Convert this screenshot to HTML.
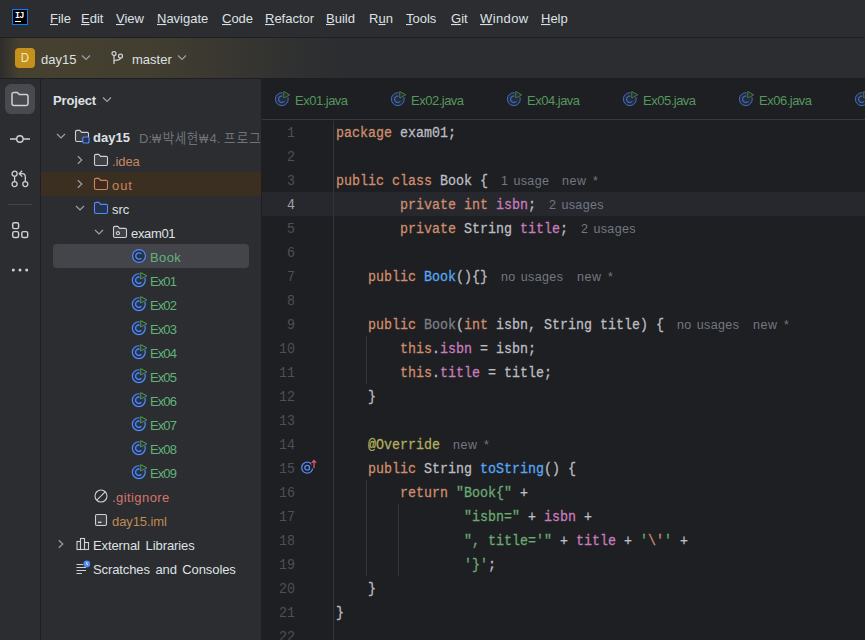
<!DOCTYPE html>
<html><head><meta charset="utf-8">
<style>
*{box-sizing:border-box;margin:0;padding:0}
html,body{width:865px;height:640px;overflow:hidden;background:#2b2d30}
body{position:relative;font-family:"Liberation Sans","NanumGothic",sans-serif;font-size:13px;color:#dfe1e5}
.abs{position:absolute}
#menubar{left:0;top:0;width:865px;height:38px;background:#2b2d30;border-bottom:1px solid #1e1f22}
.m{position:absolute;top:11px;line-height:16px;font-size:13px;color:#dfe1e5;white-space:nowrap}
.m u{text-decoration:underline;text-underline-offset:1px}
#toolbar{left:0;top:38px;width:865px;height:41px;background:linear-gradient(90deg,#2e2d2c 0,#46412f 20px,#423e30 150px,#2f3031 300px,#2b2d30 340px);border-bottom:1px solid #1e1f22}
#stripe{left:0;top:79px;width:41px;height:561px;background:#2b2d30;border-right:1px solid #1e1f22}
#proj{left:41px;top:79px;width:220px;height:561px;background:#2b2d30;overflow:hidden}
#editor{left:262px;top:79px;width:603px;height:561px;background:#1e1f22;overflow:hidden}
.t{position:absolute;line-height:16px;font-size:13px;white-space:nowrap}
.t,.m,.tab{transform:scaleY(1.050);transform-origin:0 12.500px}
.green{color:#62b37a}.orange{color:#c9875f}.red{color:#d5756c}.olive{color:#c08b50}
.gray{color:#6f737a}
.ko{font-family:"Noto Sans CJK KR","NanumGothic",sans-serif;font-size:12.500px}
svg{position:absolute;overflow:visible}
#tabs{left:0;top:0;width:603px;height:41px;border-bottom:1px solid #393b40;background:#1e1f22}
.tab{position:absolute;top:14px;line-height:16px;font-size:13px;color:#56965f;white-space:nowrap;letter-spacing:-0.500px}
.ln{position:absolute;left:0;width:33px;text-align:right;color:#4b5059;font-family:"Liberation Mono",monospace;font-size:13.33px;line-height:24px;height:24px;transform:translateY(1px) scaleY(1.140);transform-origin:0 15.700px}
.cl{position:absolute;left:74px;white-space:pre;font-family:"Liberation Mono",monospace;font-size:13.33px;line-height:24px;height:24px;color:#bcbec4;-webkit-text-stroke:0.250px;transform:translateY(1px) scaleY(1.140);transform-origin:0 15.700px}
.k{color:#cf8e6d}.f{color:#c77dbb}.fn{color:#56a8f5}.s{color:#6aab73}.an{color:#b3ae60}.dim{color:#7b7f87}
.h{position:absolute;font-family:"Liberation Sans",sans-serif;font-size:12.5px;color:#727782;line-height:24px;white-space:nowrap}
</style></head><body>
<div id="menubar" class="abs">
<div class="abs" style="left:12px;top:9px;width:16px;height:16px;background:#000;border:1px solid #087cfa"></div>
<span class="abs" style="left:15px;top:12px;font:bold 8.5px/8px 'Liberation Mono',monospace;color:#fff;letter-spacing:-0.900px">IJ</span>
<div class="abs" style="left:15px;top:21px;width:6px;height:1px;background:#fff"></div>
<span class="m" style="left:50px"><u>F</u>ile</span>
<span class="m" style="left:81px"><u>E</u>dit</span>
<span class="m" style="left:116px"><u>V</u>iew</span>
<span class="m" style="left:157px"><u>N</u>avigate</span>
<span class="m" style="left:222px"><u>C</u>ode</span>
<span class="m" style="left:265px"><u>R</u>efactor</span>
<span class="m" style="left:326px"><u>B</u>uild</span>
<span class="m" style="left:369px">R<u>u</u>n</span>
<span class="m" style="left:406px"><u>T</u>ools</span>
<span class="m" style="left:451px"><u>G</u>it</span>
<span class="m" style="left:480px"><u style="letter-spacing:0.4px">W</u><span style="letter-spacing:0.4px">indow</span></span>
<span class="m" style="left:541px"><u>H</u>elp</span>
</div>
<div id="toolbar" class="abs">
<div class="abs" style="left:15px;top:10px;width:20px;height:20px;border-radius:4px;background:#c4911c;color:#f5e6c4;font-size:13.5px;line-height:20px;text-align:center"><span style="display:inline-block;transform:scaleX(0.85)">D</span></div>
<span class="t" style="left:41px;top:14px">day15</span>
<svg style="left:81px;top:15px" width="10" height="9" viewBox="0 0 10 9"><path d="M1 2.500L5 6.500L9 2.500" fill="none" stroke="#9da0a8" stroke-width="1.2"/></svg>
<svg style="left:110px;top:12px" width="14" height="16" viewBox="0 0 14 16"><g fill="none" stroke="#ced0d6" stroke-width="1.250"><circle cx="4" cy="3.500" r="2"/><circle cx="10.500" cy="6" r="2"/><path d="M4 5.500V14M4 11.500C4 9.500 10.500 11 10.500 8"/></g></svg>
<span class="t" style="left:132px;top:14px">master</span>
<svg style="left:177px;top:15px" width="10" height="9" viewBox="0 0 10 9"><path d="M1 2.500L5 6.500L9 2.500" fill="none" stroke="#9da0a8" stroke-width="1.2"/></svg>
</div>
<div id="stripe" class="abs">
<div class="abs" style="left:5px;top:5px;width:30px;height:30px;border-radius:6px;background:#484a4f"></div>
<svg style="left:11px;top:12px" width="18" height="16" viewBox="0 0 18 16"><path d="M1 3.200C1 2.200 1.800 1.500 2.700 1.500H6.300L8.300 3.600H15.300C16.200 3.600 17 4.300 17 5.300V12.800C17 13.800 16.200 14.500 15.300 14.500H2.700C1.800 14.500 1 13.800 1 12.800Z" fill="none" stroke="#ced0d6" stroke-width="1.500"/></svg>
<svg style="left:10px;top:54px" width="20" height="12" viewBox="0 0 20 12"><g fill="none" stroke="#ced0d6" stroke-width="1.400"><circle cx="9.900" cy="6" r="3.200"/><path d="M0 6H6.700M13.100 6H20"/></g></svg>
<svg style="left:11px;top:91px" width="18" height="18" viewBox="0 0 18 18"><g fill="none" stroke="#ced0d6" stroke-width="1.300"><circle cx="3.600" cy="3.700" r="2.500"/><circle cx="3.600" cy="14.100" r="2.500"/><circle cx="14.300" cy="14.100" r="2.500"/><path d="M3.600 6.200V11.600M14.300 11.600V7C14.300 5 13.300 3.700 11.300 3.700H8.500M11.200 0.800L8.200 3.700L11.200 6.600"/></g></svg>
<div class="abs" style="left:8px;top:125px;width:24px;height:1px;background:#43454a"></div>
<svg style="left:12px;top:143px" width="17" height="17" viewBox="0 0 17 17"><g fill="none" stroke="#ced0d6" stroke-width="1.450"><rect x="0.700" y="0.700" width="5.900" height="5.900" rx="1.600"/><rect x="0.700" y="9.600" width="5.900" height="5.900" rx="1.600"/><rect x="9.800" y="9.600" width="5.900" height="5.900" rx="1.600"/></g></svg>
<svg style="left:11px;top:189px" width="18" height="4" viewBox="0 0 18 4"><g fill="#ced0d6"><circle cx="2.300" cy="2" r="1.500"/><circle cx="9" cy="2" r="1.500"/><circle cx="15.700" cy="2" r="1.500"/></g></svg>
</div>
<div id="proj" class="abs">
<span class="t" style="left:12px;top:14px;font-weight:bold;letter-spacing:-0.15px">Project</span>
<svg style="left:61px;top:16px" width="10" height="9" viewBox="0 0 10 9"><path d="M1 2.500L5 6.500L9 2.500" fill="none" stroke="#9da0a8" stroke-width="1.2"/></svg>
<div class="abs" style="left:0;top:93px;width:221px;height:24px;background:#3b2f22"></div>
<div class="abs" style="left:12px;top:165px;width:196px;height:24px;border-radius:4px;background:#43454a"></div>
<svg style="left:15px;top:52px" width="10" height="10" viewBox="0 0 10 10"><path d="M1 3L5 7L9 3" fill="none" stroke="#9da0a8" stroke-width="1.2"/></svg>
<svg style="left:33px;top:49px" width="16" height="16" viewBox="0 0 16 16"><path d="M1.500 3.800C1.500 3 2.100 2.400 3 2.400H5.800L7.600 4.400H13C13.900 4.200 14.500 4.900 14.500 5.700V12C14.500 12.800 13.900 13.500 13 13.500H3C2.100 13.500 1.500 12.800 1.500 12Z" fill="#3a3c41" stroke="#ced0d6" stroke-width="1.1"/><rect x="8.800" y="9" width="6.200" height="6" rx="1" fill="#27324a" stroke="#548af7" stroke-width="1.200"/></svg>
<span class="t " style="left:52px;top:51px;font-weight:bold">day15</span>
<span class="t gray" style="left:98px;top:51px;font-size:13px">D:<span style="display:inline-block;width:10.800px"><span style="display:inline-block;transform:scaleX(0.750);transform-origin:0 50%">₩</span></span><span class="ko" style="letter-spacing:0.500px">박세현</span><span style="display:inline-block;width:10.800px"><span style="display:inline-block;transform:scaleX(0.750);transform-origin:0 50%">₩</span></span>4. <span class="ko" style="letter-spacing:1.100px">프로그</span></span>
<svg style="left:34px;top:76px" width="10" height="10" viewBox="0 0 10 10"><path d="M2.800 1.200L6.800 5L2.800 8.800" fill="none" stroke="#9da0a8" stroke-width="1.2"/></svg>
<svg style="left:52px;top:73px" width="16" height="16" viewBox="0 0 16 16"><path d="M1.500 3.800C1.500 3 2.100 2.400 3 2.400H5.800L7.600 4.400H13C13.900 4.200 14.500 4.900 14.500 5.700V12C14.500 12.800 13.900 13.500 13 13.500H3C2.100 13.500 1.500 12.800 1.500 12Z" fill="#3e4045" stroke="#ced0d6" stroke-width="1.1"/></svg>
<span class="t orange" style="left:71px;top:75px;letter-spacing:-0.1px;">.idea</span>
<svg style="left:34px;top:100px" width="10" height="10" viewBox="0 0 10 10"><path d="M2.800 1.200L6.800 5L2.800 8.800" fill="none" stroke="#9da0a8" stroke-width="1.2"/></svg>
<svg style="left:52px;top:97px" width="16" height="16" viewBox="0 0 16 16"><path d="M1.500 3.800C1.500 3 2.100 2.400 3 2.400H5.800L7.600 4.400H13C13.900 4.200 14.500 4.900 14.500 5.700V12C14.500 12.800 13.900 13.500 13 13.500H3C2.100 13.500 1.500 12.800 1.500 12Z" fill="#40281f" stroke="#c9875f" stroke-width="1.1"/></svg>
<span class="t orange" style="left:71px;top:99px;letter-spacing:0.9px;">out</span>
<svg style="left:34px;top:124px" width="10" height="10" viewBox="0 0 10 10"><path d="M1 3L5 7L9 3" fill="none" stroke="#9da0a8" stroke-width="1.2"/></svg>
<svg style="left:52px;top:121px" width="16" height="16" viewBox="0 0 16 16"><path d="M1.500 3.800C1.500 3 2.100 2.400 3 2.400H5.800L7.600 4.400H13C13.900 4.200 14.500 4.900 14.500 5.700V12C14.500 12.800 13.900 13.500 13 13.500H3C2.100 13.500 1.500 12.800 1.500 12Z" fill="#25324d" stroke="#548af7" stroke-width="1.1"/></svg>
<span class="t " style="left:71px;top:123px;">src</span>
<svg style="left:53px;top:148px" width="10" height="10" viewBox="0 0 10 10"><path d="M1 3L5 7L9 3" fill="none" stroke="#9da0a8" stroke-width="1.2"/></svg>
<svg style="left:71px;top:145px" width="16" height="16" viewBox="0 0 16 16"><path d="M1.500 3.800C1.500 3 2.100 2.400 3 2.400H5.800L7.600 4.400H13C13.900 4.200 14.500 4.900 14.500 5.700V12C14.500 12.800 13.900 13.500 13 13.500H3C2.100 13.500 1.500 12.800 1.500 12Z" fill="#3e4045" stroke="#ced0d6" stroke-width="1.1"/><circle cx="5.900" cy="9.200" r="1.600" fill="none" stroke="#ced0d6" stroke-width="1.100"/></svg>
<span class="t " style="left:90px;top:147px;letter-spacing:-0.33px;">exam01</span>
<svg style="left:90px;top:169px;opacity:1" width="16" height="16" viewBox="0 0 16 16"><circle cx="8" cy="8" r="6.450" fill="#25324d" stroke="#548af7" stroke-width="1.2"/><path d="M10.450 5.950A3.200 3.200 0 1 0 10.450 10.050" fill="none" stroke="#548af7" stroke-width="1.3"/></svg>
<span class="t green" style="left:109px;top:171px;letter-spacing:0.4px;">Book</span>
<svg style="left:90px;top:193px;opacity:1" width="16" height="16" viewBox="0 0 16 16"><g transform="translate(-0.200,0.200)"><circle cx="8" cy="8" r="6.450" fill="#25324d" stroke="#548af7" stroke-width="1.2"/><path d="M10.450 5.950A3.200 3.200 0 1 0 10.450 10.050" fill="none" stroke="#548af7" stroke-width="1.3"/></g><path d="M8.600 -1.400L17.800 3.800L8.600 9Z" fill="#2b2d30"/><path d="M9.700 0.500L15.900 3.800L9.700 7.100Z" fill="#273c2b" stroke="#57965c" stroke-width="0.950" stroke-linejoin="round"/></svg>
<span class="t green" style="left:109px;top:195px;letter-spacing:-0.9px;">Ex01</span>
<svg style="left:90px;top:217px;opacity:1" width="16" height="16" viewBox="0 0 16 16"><g transform="translate(-0.200,0.200)"><circle cx="8" cy="8" r="6.450" fill="#25324d" stroke="#548af7" stroke-width="1.2"/><path d="M10.450 5.950A3.200 3.200 0 1 0 10.450 10.050" fill="none" stroke="#548af7" stroke-width="1.3"/></g><path d="M8.600 -1.400L17.800 3.800L8.600 9Z" fill="#2b2d30"/><path d="M9.700 0.500L15.900 3.800L9.700 7.100Z" fill="#273c2b" stroke="#57965c" stroke-width="0.950" stroke-linejoin="round"/></svg>
<span class="t green" style="left:109px;top:219px;letter-spacing:-0.9px;">Ex02</span>
<svg style="left:90px;top:241px;opacity:1" width="16" height="16" viewBox="0 0 16 16"><g transform="translate(-0.200,0.200)"><circle cx="8" cy="8" r="6.450" fill="#25324d" stroke="#548af7" stroke-width="1.2"/><path d="M10.450 5.950A3.200 3.200 0 1 0 10.450 10.050" fill="none" stroke="#548af7" stroke-width="1.3"/></g><path d="M8.600 -1.400L17.800 3.800L8.600 9Z" fill="#2b2d30"/><path d="M9.700 0.500L15.900 3.800L9.700 7.100Z" fill="#273c2b" stroke="#57965c" stroke-width="0.950" stroke-linejoin="round"/></svg>
<span class="t green" style="left:109px;top:243px;letter-spacing:-0.9px;">Ex03</span>
<svg style="left:90px;top:265px;opacity:1" width="16" height="16" viewBox="0 0 16 16"><g transform="translate(-0.200,0.200)"><circle cx="8" cy="8" r="6.450" fill="#25324d" stroke="#548af7" stroke-width="1.2"/><path d="M10.450 5.950A3.200 3.200 0 1 0 10.450 10.050" fill="none" stroke="#548af7" stroke-width="1.3"/></g><path d="M8.600 -1.400L17.800 3.800L8.600 9Z" fill="#2b2d30"/><path d="M9.700 0.500L15.900 3.800L9.700 7.100Z" fill="#273c2b" stroke="#57965c" stroke-width="0.950" stroke-linejoin="round"/></svg>
<span class="t green" style="left:109px;top:267px;letter-spacing:-0.9px;">Ex04</span>
<svg style="left:90px;top:289px;opacity:1" width="16" height="16" viewBox="0 0 16 16"><g transform="translate(-0.200,0.200)"><circle cx="8" cy="8" r="6.450" fill="#25324d" stroke="#548af7" stroke-width="1.2"/><path d="M10.450 5.950A3.200 3.200 0 1 0 10.450 10.050" fill="none" stroke="#548af7" stroke-width="1.3"/></g><path d="M8.600 -1.400L17.800 3.800L8.600 9Z" fill="#2b2d30"/><path d="M9.700 0.500L15.900 3.800L9.700 7.100Z" fill="#273c2b" stroke="#57965c" stroke-width="0.950" stroke-linejoin="round"/></svg>
<span class="t green" style="left:109px;top:291px;letter-spacing:-0.9px;">Ex05</span>
<svg style="left:90px;top:313px;opacity:1" width="16" height="16" viewBox="0 0 16 16"><g transform="translate(-0.200,0.200)"><circle cx="8" cy="8" r="6.450" fill="#25324d" stroke="#548af7" stroke-width="1.2"/><path d="M10.450 5.950A3.200 3.200 0 1 0 10.450 10.050" fill="none" stroke="#548af7" stroke-width="1.3"/></g><path d="M8.600 -1.400L17.800 3.800L8.600 9Z" fill="#2b2d30"/><path d="M9.700 0.500L15.900 3.800L9.700 7.100Z" fill="#273c2b" stroke="#57965c" stroke-width="0.950" stroke-linejoin="round"/></svg>
<span class="t green" style="left:109px;top:315px;letter-spacing:-0.9px;">Ex06</span>
<svg style="left:90px;top:337px;opacity:1" width="16" height="16" viewBox="0 0 16 16"><g transform="translate(-0.200,0.200)"><circle cx="8" cy="8" r="6.450" fill="#25324d" stroke="#548af7" stroke-width="1.2"/><path d="M10.450 5.950A3.200 3.200 0 1 0 10.450 10.050" fill="none" stroke="#548af7" stroke-width="1.3"/></g><path d="M8.600 -1.400L17.800 3.800L8.600 9Z" fill="#2b2d30"/><path d="M9.700 0.500L15.900 3.800L9.700 7.100Z" fill="#273c2b" stroke="#57965c" stroke-width="0.950" stroke-linejoin="round"/></svg>
<span class="t green" style="left:109px;top:339px;letter-spacing:-0.9px;">Ex07</span>
<svg style="left:90px;top:361px;opacity:1" width="16" height="16" viewBox="0 0 16 16"><g transform="translate(-0.200,0.200)"><circle cx="8" cy="8" r="6.450" fill="#25324d" stroke="#548af7" stroke-width="1.2"/><path d="M10.450 5.950A3.200 3.200 0 1 0 10.450 10.050" fill="none" stroke="#548af7" stroke-width="1.3"/></g><path d="M8.600 -1.400L17.800 3.800L8.600 9Z" fill="#2b2d30"/><path d="M9.700 0.500L15.900 3.800L9.700 7.100Z" fill="#273c2b" stroke="#57965c" stroke-width="0.950" stroke-linejoin="round"/></svg>
<span class="t green" style="left:109px;top:363px;letter-spacing:-0.9px;">Ex08</span>
<svg style="left:90px;top:385px;opacity:1" width="16" height="16" viewBox="0 0 16 16"><g transform="translate(-0.200,0.200)"><circle cx="8" cy="8" r="6.450" fill="#25324d" stroke="#548af7" stroke-width="1.2"/><path d="M10.450 5.950A3.200 3.200 0 1 0 10.450 10.050" fill="none" stroke="#548af7" stroke-width="1.3"/></g><path d="M8.600 -1.400L17.800 3.800L8.600 9Z" fill="#2b2d30"/><path d="M9.700 0.500L15.900 3.800L9.700 7.100Z" fill="#273c2b" stroke="#57965c" stroke-width="0.950" stroke-linejoin="round"/></svg>
<span class="t green" style="left:109px;top:387px;letter-spacing:-0.9px;">Ex09</span>
<svg style="left:52px;top:409px" width="16" height="16" viewBox="0 0 16 16"><g fill="none" stroke="#ced0d6" stroke-width="1.100"><circle cx="8" cy="8" r="6"/><path d="M3.800 12.200L12.200 3.800"/></g></svg>
<span class="t red" style="left:71px;top:411px;letter-spacing:0.42px;">.gitignore</span>
<svg style="left:52px;top:433px" width="16" height="16" viewBox="0 0 16 16"><g fill="none" stroke="#ced0d6" stroke-width="1.100"><rect x="2.500" y="2.500" width="11" height="11" rx="1.500" fill="#3e4045"/><path d="M5 10.300H8.500" stroke-width="1.400"/></g></svg>
<span class="t olive" style="left:71px;top:435px;letter-spacing:-0.1px;">day15.iml</span>
<svg style="left:15px;top:460px" width="10" height="10" viewBox="0 0 10 10"><path d="M2.800 1.200L6.800 5L2.800 8.800" fill="none" stroke="#9da0a8" stroke-width="1.2"/></svg>
<svg style="left:34px;top:457px" width="16" height="16" viewBox="0 0 16 16"><g fill="none" stroke="#ced0d6" stroke-width="1.100"><rect x="2" y="5.500" width="3.500" height="8"/><rect x="5.500" y="2.500" width="4" height="11"/><rect x="9.500" y="6.500" width="4" height="7"/></g></svg>
<span class="t " style="left:52px;top:459px;letter-spacing:-0.1px;word-spacing:2.2px;">External Libraries</span>
<svg style="left:34px;top:481px" width="16" height="16" viewBox="0 0 16 16"><g fill="none" stroke="#ced0d6" stroke-width="1.100"><path d="M1.500 4.500H8M1.500 7.500H11M1.500 10.500H11M1.500 13.500H7"/></g><circle cx="11.800" cy="4" r="3.400" fill="#548af7"/><path d="M11.800 2.200V4.200L13 5" fill="none" stroke="#ffffff" stroke-width="0.900"/></svg>
<span class="t " style="left:52px;top:483px;letter-spacing:-0.1px;word-spacing:2px;">Scratches and Consoles</span>
</div>
<div class="abs" style="left:261px;top:79px;width:1px;height:561px;background:#1e1f22"></div>
<div id="editor" class="abs">
<div id="tabs" class="abs">
<svg style="left:12px;top:12px;opacity:0.75" width="16" height="16" viewBox="0 0 16 16"><g transform="translate(-0.200,0.200)"><circle cx="8" cy="8" r="6.450" fill="#25324d" stroke="#548af7" stroke-width="0.95"/><path d="M10.450 5.950A3.200 3.200 0 1 0 10.450 10.050" fill="none" stroke="#548af7" stroke-width="1.05"/></g><path d="M8.600 -1.400L17.800 3.800L8.600 9Z" fill="#1e1f22"/><path d="M9.700 0.500L15.900 3.800L9.700 7.100Z" fill="#273c2b" stroke="#57965c" stroke-width="0.950" stroke-linejoin="round"/></svg>
<span class="tab" style="left:33px">Ex01.java</span>
<svg style="left:128px;top:12px;opacity:0.75" width="16" height="16" viewBox="0 0 16 16"><g transform="translate(-0.200,0.200)"><circle cx="8" cy="8" r="6.450" fill="#25324d" stroke="#548af7" stroke-width="0.95"/><path d="M10.450 5.950A3.200 3.200 0 1 0 10.450 10.050" fill="none" stroke="#548af7" stroke-width="1.05"/></g><path d="M8.600 -1.400L17.800 3.800L8.600 9Z" fill="#1e1f22"/><path d="M9.700 0.500L15.900 3.800L9.700 7.100Z" fill="#273c2b" stroke="#57965c" stroke-width="0.950" stroke-linejoin="round"/></svg>
<span class="tab" style="left:149px">Ex02.java</span>
<svg style="left:244px;top:12px;opacity:0.75" width="16" height="16" viewBox="0 0 16 16"><g transform="translate(-0.200,0.200)"><circle cx="8" cy="8" r="6.450" fill="#25324d" stroke="#548af7" stroke-width="0.95"/><path d="M10.450 5.950A3.200 3.200 0 1 0 10.450 10.050" fill="none" stroke="#548af7" stroke-width="1.05"/></g><path d="M8.600 -1.400L17.800 3.800L8.600 9Z" fill="#1e1f22"/><path d="M9.700 0.500L15.900 3.800L9.700 7.100Z" fill="#273c2b" stroke="#57965c" stroke-width="0.950" stroke-linejoin="round"/></svg>
<span class="tab" style="left:265px">Ex04.java</span>
<svg style="left:360px;top:12px;opacity:0.75" width="16" height="16" viewBox="0 0 16 16"><g transform="translate(-0.200,0.200)"><circle cx="8" cy="8" r="6.450" fill="#25324d" stroke="#548af7" stroke-width="0.95"/><path d="M10.450 5.950A3.200 3.200 0 1 0 10.450 10.050" fill="none" stroke="#548af7" stroke-width="1.05"/></g><path d="M8.600 -1.400L17.800 3.800L8.600 9Z" fill="#1e1f22"/><path d="M9.700 0.500L15.900 3.800L9.700 7.100Z" fill="#273c2b" stroke="#57965c" stroke-width="0.950" stroke-linejoin="round"/></svg>
<span class="tab" style="left:381px">Ex05.java</span>
<svg style="left:476px;top:12px;opacity:0.75" width="16" height="16" viewBox="0 0 16 16"><g transform="translate(-0.200,0.200)"><circle cx="8" cy="8" r="6.450" fill="#25324d" stroke="#548af7" stroke-width="0.95"/><path d="M10.450 5.950A3.200 3.200 0 1 0 10.450 10.050" fill="none" stroke="#548af7" stroke-width="1.05"/></g><path d="M8.600 -1.400L17.800 3.800L8.600 9Z" fill="#1e1f22"/><path d="M9.700 0.500L15.900 3.800L9.700 7.100Z" fill="#273c2b" stroke="#57965c" stroke-width="0.950" stroke-linejoin="round"/></svg>
<span class="tab" style="left:497px">Ex06.java</span>
<svg style="left:592px;top:12px;opacity:0.75" width="16" height="16" viewBox="0 0 16 16"><g transform="translate(-0.200,0.200)"><circle cx="8" cy="8" r="6.450" fill="#25324d" stroke="#548af7" stroke-width="0.95"/><path d="M10.450 5.950A3.200 3.200 0 1 0 10.450 10.050" fill="none" stroke="#548af7" stroke-width="1.05"/></g><path d="M8.600 -1.400L17.800 3.800L8.600 9Z" fill="#1e1f22"/><path d="M9.700 0.500L15.900 3.800L9.700 7.100Z" fill="#273c2b" stroke="#57965c" stroke-width="0.950" stroke-linejoin="round"/></svg>
</div>
<div class="abs" style="left:0;top:113px;width:603px;height:24px;background:#26282e"></div>
<div class="abs" style="left:71px;top:42px;width:1px;height:520px;background:#313438"></div>
<div class="ln" style="top:42px;color:#4b5059">1</div>
<div class="cl" style="top:42px"><span class="k">package</span> exam01;</div>
<div class="ln" style="top:66px;color:#4b5059">2</div>
<div class="ln" style="top:90px;color:#4b5059">3</div>
<div class="cl" style="top:90px"><span class="k">public class</span> Book {</div>
<span class="h" style="left:239px;top:90px;letter-spacing:0.38px;word-spacing:1.2px">1 usage</span>
<span class="h" style="left:300px;top:90px;letter-spacing:0.55px;word-spacing:2.4px">new *</span>
<div class="ln" style="top:114px;color:#a1a3ab">4</div>
<div class="cl" style="top:114px">        <span class="k">private int</span> <span class="f">isbn</span>;</div>
<span class="h" style="left:287px;top:114px;letter-spacing:0.38px;word-spacing:1.2px">2 usages</span>
<div class="ln" style="top:138px;color:#4b5059">5</div>
<div class="cl" style="top:138px">        <span class="k">private</span> String <span class="f">title</span>;</div>
<span class="h" style="left:319px;top:138px;letter-spacing:0.38px;word-spacing:1.2px">2 usages</span>
<div class="ln" style="top:162px;color:#4b5059">6</div>
<div class="ln" style="top:186px;color:#4b5059">7</div>
<div class="cl" style="top:186px">    <span class="k">public</span> <span class="fn">Book</span>(){}</div>
<span class="h" style="left:239px;top:186px;letter-spacing:0.38px;word-spacing:1.2px">no usages</span>
<span class="h" style="left:315px;top:186px;letter-spacing:0.55px;word-spacing:2.4px">new *</span>
<div class="ln" style="top:210px;color:#4b5059">8</div>
<div class="ln" style="top:234px;color:#4b5059">9</div>
<div class="cl" style="top:234px">    <span class="k">public</span> <span class="dim">Book</span>(<span class="k">int</span> isbn, String title) {</div>
<span class="h" style="left:415px;top:234px;letter-spacing:0.38px;word-spacing:1.2px">no usages</span>
<span class="h" style="left:491px;top:234px;letter-spacing:0.55px;word-spacing:2.4px">new *</span>
<div class="ln" style="top:258px;color:#4b5059">10</div>
<div class="cl" style="top:258px">        <span class="k">this</span>.<span class="f">isbn</span> = isbn;</div>
<div class="ln" style="top:282px;color:#4b5059">11</div>
<div class="cl" style="top:282px">        <span class="k">this</span>.<span class="f">title</span> = title;</div>
<div class="ln" style="top:306px;color:#4b5059">12</div>
<div class="cl" style="top:306px">    }</div>
<div class="ln" style="top:330px;color:#4b5059">13</div>
<div class="ln" style="top:354px;color:#4b5059">14</div>
<div class="cl" style="top:354px">    <span class="an">@Override</span></div>
<span class="h" style="left:191px;top:354px;letter-spacing:0.55px;word-spacing:2.4px">new *</span>
<div class="ln" style="top:378px;color:#4b5059">15</div>
<div class="cl" style="top:378px">    <span class="k">public</span> String <span class="fn">toString</span>() {</div>
<div class="ln" style="top:402px;color:#4b5059">16</div>
<div class="cl" style="top:402px">        <span class="k">return</span> <span class="s">"Book{"</span> +</div>
<div class="ln" style="top:426px;color:#4b5059">17</div>
<div class="cl" style="top:426px">                <span class="s">"isbn="</span> + <span class="f">isbn</span> +</div>
<div class="ln" style="top:450px;color:#4b5059">18</div>
<div class="cl" style="top:450px">                <span class="s">", title='"</span> + <span class="f">title</span> + <span class="s">'</span><span class="k">\'</span><span class="s">'</span> +</div>
<div class="ln" style="top:474px;color:#4b5059">19</div>
<div class="cl" style="top:474px">                <span class="s">'}'</span>;</div>
<div class="ln" style="top:498px;color:#4b5059">20</div>
<div class="cl" style="top:498px">    }</div>
<div class="ln" style="top:522px;color:#4b5059">21</div>
<div class="cl" style="top:522px">}</div>
<div class="ln" style="top:546px;color:#4b5059">22</div>
<div class="abs" style="left:104px;top:257px;width:1px;height:48px;background:#313438"></div>
<div class="abs" style="left:104px;top:401px;width:1px;height:96px;background:#313438"></div>
<div class="abs" style="left:136px;top:425px;width:1px;height:72px;background:#313438"></div>
<svg style="left:39px;top:379px" width="18" height="16" viewBox="0 0 18 16"><g fill="none" stroke="#548af7" stroke-width="1.300"><circle cx="6.200" cy="9.700" r="5.500"/><circle cx="6.200" cy="9.700" r="2.400"/></g><path d="M10.300 1.500H15.600V10.500H10.300Z" fill="#1e1f22"/><path d="M13 10V2.500M10.700 4.900L13 2.400L15.300 4.900" fill="none" stroke="#e0566a" stroke-width="1.300"/></svg>
</div>
</body></html>
